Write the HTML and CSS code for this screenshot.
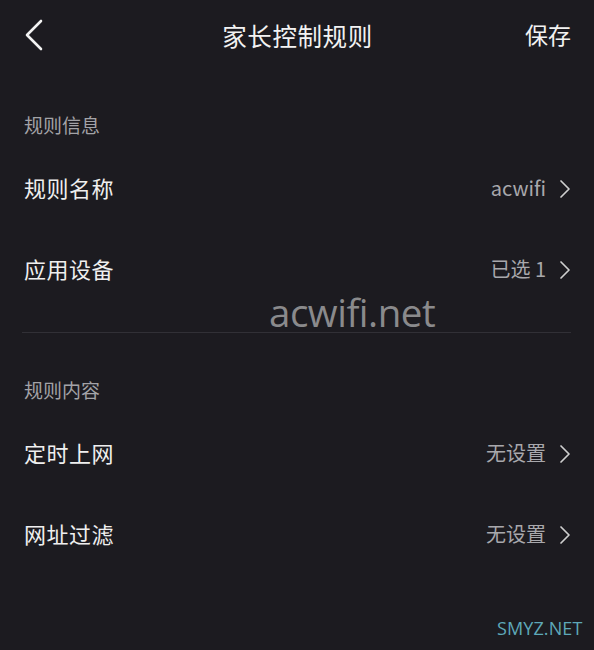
FILE: index.html
```html
<!DOCTYPE html>
<html lang="zh-CN">
<head>
    <meta charset="UTF-8">
    <meta name="viewport" content="width=device-width, initial-scale=1.0">
    <title>家长控制规则</title>
    <link rel="stylesheet" href="styles.css">
</head>
<body>
    <div id="app">
        <div class="header">
            <svg class="back" width="20" height="32" viewBox="0 0 20 32">
                <polyline points="17,2 3,16 17,30" fill="none" stroke="#f2f2f2" stroke-width="2.6" stroke-linecap="round" stroke-linejoin="round"/>
            </svg>
            <div class="title">家长控制规则</div>
            <div class="save">保存</div>
        </div>

        <div class="section-label first">规则信息</div>
        <div class="row">
            <span class="name">规则名称</span>
            <span class="value">acwifi</span>
            <svg class="arrow" width="12" height="20" viewBox="0 0 12 20"><polyline points="2,2 10,10 2,18" fill="none" stroke="#cfcfcf" stroke-width="1.7" stroke-linecap="round" stroke-linejoin="round"/></svg>
        </div>
        <div class="row">
            <span class="name">应用设备</span>
            <span class="value">已选 1</span>
            <svg class="arrow" width="12" height="20" viewBox="0 0 12 20"><polyline points="2,2 10,10 2,18" fill="none" stroke="#cfcfcf" stroke-width="1.7" stroke-linecap="round" stroke-linejoin="round"/></svg>
        </div>

        <div class="divider"></div>

        <div class="section-label">规则内容</div>
        <div class="row">
            <span class="name">定时上网</span>
            <span class="value">无设置</span>
            <svg class="arrow" width="12" height="20" viewBox="0 0 12 20"><polyline points="2,2 10,10 2,18" fill="none" stroke="#cfcfcf" stroke-width="1.7" stroke-linecap="round" stroke-linejoin="round"/></svg>
        </div>
        <div class="row">
            <span class="name">网址过滤</span>
            <span class="value">无设置</span>
            <svg class="arrow" width="12" height="20" viewBox="0 0 12 20"><polyline points="2,2 10,10 2,18" fill="none" stroke="#cfcfcf" stroke-width="1.7" stroke-linecap="round" stroke-linejoin="round"/></svg>
        </div>

        <div class="watermark">acwifi.net</div>
        <div class="stamp">SMYZ.NET</div>
    </div>
</body>
</html>
```

FILE: styles.css
```css
body {
    margin: 0;
    padding: 0;
    background-color: #1c1b20;
    font-family: "Noto Sans CJK SC", "Liberation Sans", sans-serif;
    color: #ececec;
}
#app {
    position: relative;
    width: 594px;
    height: 650px;
    overflow: hidden;
}
.header {
    height: 70px;
    display: grid;
    grid-template-columns: 1fr auto 1fr;
    align-items: center;
    padding: 0 23px 0 24px;
}
.back {
    display: block;
}
.title {
    font-size: 24.5px;
    color: #f2f2f2;
    letter-spacing: 0.6px;
}
.save {
    font-size: 23px;
    color: #f2f2f2;
    justify-self: end;
    margin-top: -2px;
}
.section-label {
    height: 22px;
    line-height: 22px;
    font-size: 19px;
    color: #a3a3a7;
    padding: 46px 24px 0;
    margin-bottom: 12px;
}
.section-label.first {
    padding-top: 44px;
}
.row {
    height: 81px;
    display: flex;
    align-items: center;
    padding: 0 23px 0 24px;
}
.name {
    font-size: 22px;
    color: #efefef;
    flex: 1;
    letter-spacing: 0.5px;
    margin-top: -3px;
}
.value {
    font-size: 20px;
    color: #a8a8ac;
    margin-right: 13px;
    margin-top: -2px;
}
.arrow {
    display: block;
}
.divider {
    height: 1px;
    background-color: #313036;
    margin: 22px 23px 0 22px;
}
.watermark {
    position: absolute;
    left: 269px;
    top: 286px;
    font-family: "Open Sans", sans-serif;
    font-size: 38.5px;
    color: #8a8a8c;
    letter-spacing: -0.5px;
}
.stamp {
    position: absolute;
    left: 497px;
    top: 616px;
    font-family: "Open Sans", sans-serif;
    font-size: 18px;
    color: #5ea8b8;
    letter-spacing: 0.1px;
}
```
